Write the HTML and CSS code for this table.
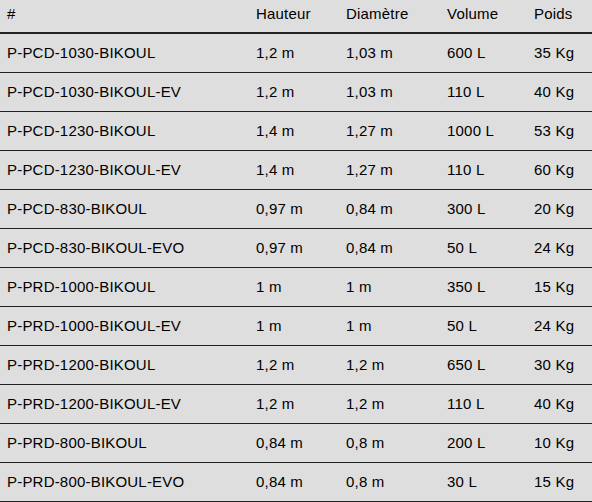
FILE: index.html
```html
<!DOCTYPE html>
<html lang="fr">
<head>
<meta charset="utf-8">
<title>Tableau</title>
<link rel="stylesheet" href="styles.css">
</head>
<body>
<table class="specs">
  <colgroup>
    <col class="c1"><col class="c2"><col class="c3"><col class="c4"><col class="c5">
  </colgroup>
  <thead>
    <tr><th>#</th><th>Hauteur</th><th>Diamètre</th><th>Volume</th><th>Poids</th></tr>
  </thead>
  <tbody>
    <tr><td>P-PCD-1030-BIKOUL</td><td>1,2 m</td><td>1,03 m</td><td>600 L</td><td>35 Kg</td></tr>
    <tr><td>P-PCD-1030-BIKOUL-EV</td><td>1,2 m</td><td>1,03 m</td><td>110 L</td><td>40 Kg</td></tr>
    <tr><td>P-PCD-1230-BIKOUL</td><td>1,4 m</td><td>1,27 m</td><td>1000 L</td><td>53 Kg</td></tr>
    <tr><td>P-PCD-1230-BIKOUL-EV</td><td>1,4 m</td><td>1,27 m</td><td>110 L</td><td>60 Kg</td></tr>
    <tr><td>P-PCD-830-BIKOUL</td><td>0,97 m</td><td>0,84 m</td><td>300 L</td><td>20 Kg</td></tr>
    <tr><td>P-PCD-830-BIKOUL-EVO</td><td>0,97 m</td><td>0,84 m</td><td>50 L</td><td>24 Kg</td></tr>
    <tr><td>P-PRD-1000-BIKOUL</td><td>1 m</td><td>1 m</td><td>350 L</td><td>15 Kg</td></tr>
    <tr><td>P-PRD-1000-BIKOUL-EV</td><td>1 m</td><td>1 m</td><td>50 L</td><td>24 Kg</td></tr>
    <tr><td>P-PRD-1200-BIKOUL</td><td>1,2 m</td><td>1,2 m</td><td>650 L</td><td>30 Kg</td></tr>
    <tr><td>P-PRD-1200-BIKOUL-EV</td><td>1,2 m</td><td>1,2 m</td><td>110 L</td><td>40 Kg</td></tr>
    <tr><td>P-PRD-800-BIKOUL</td><td>0,84 m</td><td>0,8 m</td><td>200 L</td><td>10 Kg</td></tr>
    <tr><td>P-PRD-800-BIKOUL-EVO</td><td>0,84 m</td><td>0,8 m</td><td>30 L</td><td>15 Kg</td></tr>
  </tbody>
</table>
</body>
</html>
```
FILE: styles.css
```css
html, body {
  margin: 0;
  padding: 0;
  background: #dedede;
}
body {
  font-family: "Liberation Sans", Arial, sans-serif;
  font-size: 15px;
  letter-spacing: 0.2px;
  color: #000;
  width: 592px;
  height: 502px;
  overflow: hidden;
}
.specs {
  width: 592px;
  border-collapse: collapse;
  table-layout: fixed;
}
.c1 { width: 249px; }
.c2 { width: 90px; }
.c3 { width: 101px; }
.c4 { width: 87px; }
.c5 { width: 65px; }
.specs th,
.specs td {
  text-align: left;
  font-weight: normal;
  line-height: 17px;
  padding: 0 0 0 7px;
  white-space: nowrap;
  box-sizing: border-box;
  vertical-align: top;
}
.specs th {
  height: 32px;
  padding-top: 5px;
  padding-bottom: 10px;
  border-bottom: 2px solid #222;
}
.specs td {
  height: 38px;
  padding-top: 10px;
  padding-bottom: 11px;
  border-bottom: 1px solid #222;
}
```
